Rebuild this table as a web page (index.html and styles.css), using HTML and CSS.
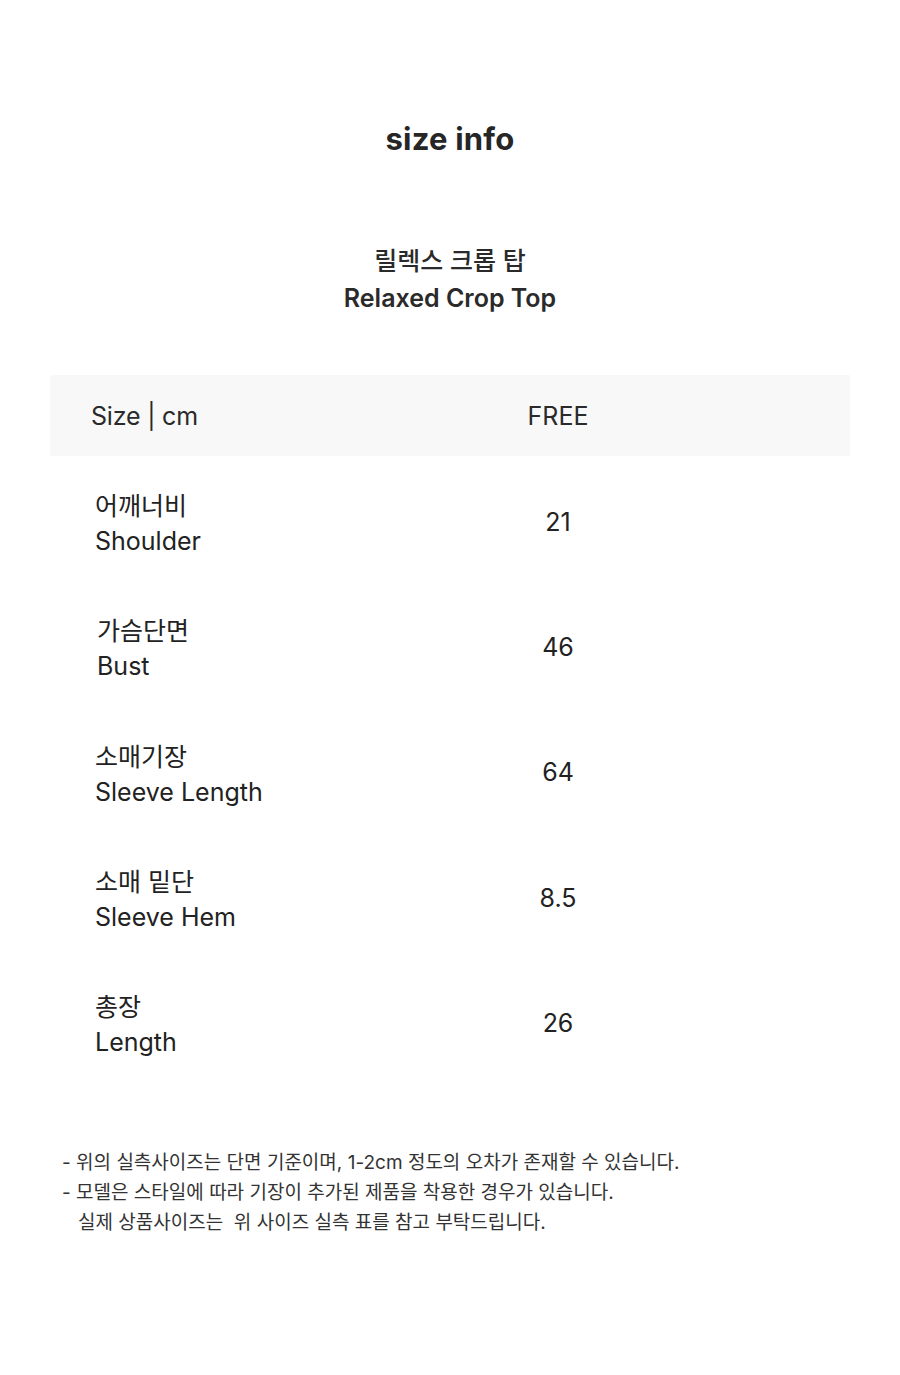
FILE: index.html
```html
<!DOCTYPE html>
<html lang="ko">
<head>
<meta charset="utf-8">
<title>size info</title>
<link rel="stylesheet" href="styles.css">
</head>
<body>
<main class="page">
  <h1 class="title">size info</h1>
  <div class="product">
    <div class="product-ko">릴렉스 크롭 탑</div>
    <div class="product-en">Relaxed Crop Top</div>
  </div>
  <section class="table">
    <div class="thead">
      <div class="th-label">Size | cm</div>
      <div class="th-value">FREE</div>
    </div>
    <div class="row first">
      <div class="label"><span>어깨너비</span><span>Shoulder</span></div>
      <div class="value">21</div>
    </div>
    <div class="row">
      <div class="label shift"><span>가슴단면</span><span>Bust</span></div>
      <div class="value">46</div>
    </div>
    <div class="row">
      <div class="label"><span>소매기장</span><span>Sleeve Length</span></div>
      <div class="value">64</div>
    </div>
    <div class="row">
      <div class="label"><span>소매 밑단</span><span>Sleeve Hem</span></div>
      <div class="value">8.5</div>
    </div>
    <div class="row">
      <div class="label"><span>총장</span><span>Length</span></div>
      <div class="value">26</div>
    </div>
  </section>
  <section class="notes">
    <p>- 위의 실측사이즈는 단면 기준이며, 1-2cm 정도의 오차가 존재할 수 있습니다.</p>
    <p>- 모델은 스타일에 따라 기장이 추가된 제품을 착용한 경우가 있습니다.</p>
    <p class="indent">실제 상품사이즈는&nbsp; 위 사이즈 실측 표를 참고 부탁드립니다.</p>
  </section>
</main>
</body>
</html>
```

FILE: styles.css
```css
html, body {
  margin: 0;
  padding: 0;
  background: #ffffff;
}
body {
  font-family: Inter, "Noto Sans CJK KR", sans-serif;
  color: #222222;
}
*, *::before, *::after {
  box-sizing: border-box;
}
.page {
  width: 900px;
  min-height: 1375px;
  padding-top: 118px;
}
.title {
  margin: 0;
  text-align: center;
  font-size: 31px;
  font-weight: 700;
  line-height: 42px;
  color: #262626;
  letter-spacing: 0.2px;
}
.product {
  margin-top: 83px;
  text-align: center;
  font-size: 25px;
  font-weight: 600;
  line-height: 37px;
  color: #2a2a2a;
}
.product-ko {
  font-weight: 500;
}
.table {
  margin: 58px 50px 0;
}
.thead {
  height: 81px;
  background: #f8f8f8;
  display: flex;
  align-items: center;
  font-size: 25px;
  color: #2a2a2a;
}
.th-label {
  padding-left: 41px;
  width: 458px;
  letter-spacing: -0.2px;
}
.th-value {
  width: 100px;
  text-align: center;
}
.row {
  height: 125.3px;
  display: flex;
  align-items: center;
  font-size: 25px;
  color: #222222;
}
.row.first {
  margin-top: 3px;
}
.label {
  width: 458px;
  padding-left: 45px;
  display: flex;
  flex-direction: column;
  line-height: 35px;
  padding-top: 5px;
}
.label.shift {
  padding-left: 47px;
}
.value {
  width: 100px;
  text-align: center;
}
.notes {
  margin-top: 63px;
  padding-left: 62px;
  font-size: 19px;
  color: #333333;
  letter-spacing: 0;
}
.notes p {
  margin: 0;
  line-height: 30px;
}
.notes .indent {
  padding-left: 16px;
}
```
